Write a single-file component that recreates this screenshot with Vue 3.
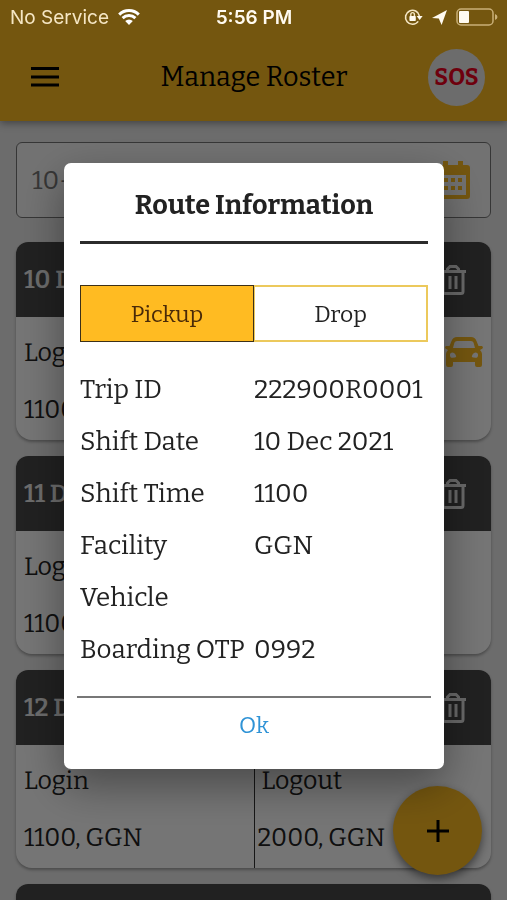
<script setup>
import { ref } from 'vue'

const date = ref('10-12-2021')
const direction = ref('Pickup')

const rosters = [
  { day: '10 Dec 2021', login: '1100, GGN', logout: '2000, GGN', cab: true },
  { day: '11 Dec 2021', login: '1100, GGN', logout: '2000, GGN', cab: false },
  { day: '12 Dec 2021', login: '1100, GGN', logout: '2000, GGN', cab: false },
  { day: '13 Dec 2021', login: '1100, GGN', logout: '2000, GGN', cab: false },
]

const details = [
  ['Trip ID', '222900R0001'],
  ['Shift Date', '10 Dec 2021'],
  ['Shift Time', '1100'],
  ['Facility', 'GGN'],
  ['Vehicle', ''],
  ['Boarding OTP', '0992'],
]
</script>

<template>
  <div class="screen">
    <header class="app-bar">
      <div class="status">
        <div class="status-left">
          <span>No Service</span>
          <svg class="wifi" viewBox="0 0 22 16" aria-hidden="true">
            <path d="M1.2 5.6a14 14 0 0 1 19.6 0" />
            <path d="M4.6 9.2a9.2 9.2 0 0 1 12.8 0" />
            <path class="solid" d="M7.2 12a5.5 5.5 0 0 1 7.6 0L11 16z" />
          </svg>
        </div>
        <strong class="time">5:56 PM</strong>
        <div class="status-right">
          <svg class="lock" viewBox="0 0 19 18" aria-hidden="true">
            <path class="line" d="M14.2 13.4A7 7 0 1 1 15.4 8" />
            <path d="M12.6 8h6l-3 4z" />
            <rect x="5.4" y="8" width="6.4" height="5" rx="0.8" />
            <path class="thin" d="M6.8 8V6.4a1.8 1.8 0 0 1 3.6 0V8" />
          </svg>
          <svg class="arrow" viewBox="0 0 15 15" aria-hidden="true">
            <path d="M15 0 9.600 15 6.800 8.600 0 8z" />
          </svg>
          <svg class="battery" viewBox="0 0 42 18" aria-hidden="true">
            <rect class="case" x="1" y="1" width="36" height="16" rx="4" />
            <rect x="3" y="3" width="10" height="12" rx="1" />
            <path class="tip" d="M39 6q2.500 1 2.500 3t-2.500 3z" />
          </svg>
        </div>
      </div>
      <div class="toolbar">
        <button class="menu" type="button" aria-label="Menu">
          <svg viewBox="0 0 30 20"><path d="M1 1.500h28M1 10h28M1 18h28" /></svg>
        </button>
        <h1>Manage Roster</h1>
        <button class="sos" type="button">SOS</button>
      </div>
    </header>

    <main class="content">
      <div class="date-field">
        <input v-model="date" type="text" aria-label="Date" />
        <svg class="calendar" viewBox="0 0 34 38" aria-hidden="true">
          <path
            fill-rule="evenodd"
            d="M7 0h5v4h10V0h5v4h4q3 0 3 3v28q0 3-3 3H3q-3 0-3-3V7q0-3 3-3h4zM4 14v20h26V14z"
          />
          <path
            d="M8 17h4v4H8zM15 17h4v4h-4zM22 17h4v4h-4zM8 25h4v4H8zM15 25h4v4h-4zM22 25h4v4h-4z"
          />
        </svg>
      </div>

      <article v-for="r in rosters" :key="r.day" class="card">
        <div class="card-head">
          <h2>{{ r.day }}</h2>
          <button class="trash" type="button" aria-label="Delete">
            <svg viewBox="0 0 26 30">
              <path d="M0 6.500h26M3 7v19.500q0 2 2 2h16q2 0 2-2V7M7.500 6V4l2.500-2.500h6L18.500 4v2M10 11v13M16 11v13" />
            </svg>
          </button>
        </div>
        <div class="card-body">
          <div class="half">
            <p>Login</p>
            <p>{{ r.login }}</p>
          </div>
          <div class="half logout">
            <p>Logout</p>
            <p>{{ r.logout }}</p>
            <svg v-if="r.cab" class="car" viewBox="0 0 38 30" aria-hidden="true">
              <path
                fill-rule="evenodd"
                d="M12 0h14q4 0 5.500 4l2 5H37q1.500 1 .5 2.500L35 13q2 2 2 4v11q0 2-2 2h-3q-2 0-2-2v-3H8v3q0 2-2 2H3q-2 0-2-2V17q0-2 2-4L.5 11.500Q-.5 10 1 9h3.500l2-5Q8 0 12 0zM12 4q-2 0-2.600 1.800L8 11h22l-1.400-5.200Q28 4 26 4zM7.500 15.500a2.600 2.600 0 1 0 .1 5.200q2.400 0 3.600-.7-.4-4-3.700-4.500zM30.500 15.500q-3.300.5-3.700 4.500 1.200.7 3.600.7a2.600 2.600 0 1 0 .1-5.200z"
              />
            </svg>
          </div>
        </div>
      </article>
    </main>

    <button class="fab" type="button" aria-label="Add roster">
      <svg viewBox="0 0 22 22"><path d="M11 0v22M0 11h22" /></svg>
    </button>

    <div class="backdrop">
      <section class="dialog" role="dialog" aria-modal="true" aria-labelledby="dialog-title">
        <h2 id="dialog-title">Route Information</h2>
        <div class="tabs">
          <button
            v-for="d in ['Pickup', 'Drop']"
            :key="d"
            type="button"
            :class="{ active: direction === d }"
            @click="direction = d"
          >
            {{ d }}
          </button>
        </div>
        <dl>
          <div v-for="[label, value] in details" :key="label" class="row">
            <dt>{{ label }}</dt>
            <dd>{{ value }}</dd>
          </div>
        </dl>
        <div class="actions">
          <button type="button">Ok</button>
        </div>
      </section>
    </div>
  </div>
</template>

<style>
body {
  margin: 0;
}
</style>

<style scoped>
.screen {
  height: 100vh;
  overflow: hidden;
  background: #ebebeb;
  color: #222;
  font-family: Bitter, 'DejaVu Serif', serif;
}
h1,
h2,
p,
dl,
dd {
  margin: 0;
}
button {
  padding: 0;
  border: 0;
  background: none;
  color: inherit;
  font: inherit;
}
svg {
  display: block;
}

.app-bar {
  height: 121px;
  background: #fdbc22;
  box-shadow: 0 2px 8px rgba(0, 0, 0, 0.4);
}
.status {
  position: relative;
  z-index: 3;
  display: grid;
  grid-template-columns: 1fr auto 1fr;
  align-items: center;
  height: 34px;
  padding: 0 9px 0 10px;
  color: #fffaf0;
  fill: #fffaf0;
  font-family: Inter, sans-serif;
  font-size: 19px;
}
.status-left,
.status-right {
  display: flex;
  align-items: center;
  gap: 9px;
}
.status-left {
  color: #f5e6c4;
}
.status-right {
  justify-content: flex-end;
}
.time {
  font-weight: 600;
}
.wifi {
  width: 22px;
  height: 16px;
  fill: none;
  stroke: #fff;
  stroke-width: 3;
}
.wifi .solid {
  fill: #fff;
  stroke: none;
}
.lock {
  width: 19px;
  height: 18px;
}
.lock .line,
.lock .thin {
  fill: none;
  stroke: #f5e6c4;
  stroke-width: 1.6;
}
.lock .thin {
  stroke-width: 1.4;
}
.arrow {
  width: 15px;
  height: 15px;
}
.battery {
  width: 42px;
  height: 18px;
}
.battery .case {
  fill: none;
  stroke: #c9b078;
  stroke-width: 1.5;
}
.battery .tip {
  fill: #c9b078;
}
.toolbar {
  display: flex;
  align-items: center;
  justify-content: space-between;
  height: 86px;
  padding: 0 22px 0 30px;
  color: #000;
}
.menu,
.sos {
  display: flex;
  align-items: center;
  height: 57px;
}
.menu {
  width: 50px;
}
.menu svg {
  width: 30px;
  height: 20px;
  stroke: #000;
  stroke-width: 3;
}
.toolbar h1 {
  font-size: 27px;
  font-weight: 400;
}
.sos {
  justify-content: center;
  width: 57px;
  border-radius: 50%;
  background: #ebebeb;
  color: #f00020;
  font-size: 23px;
  font-weight: 700;
}

.content {
  display: flex;
  flex-direction: column;
  gap: 16px;
  padding: 21px 16px 0;
}
.date-field {
  display: flex;
  align-items: center;
  height: 74px;
  margin-bottom: 8px;
  padding: 0 20px 0 15px;
  border: 1px solid #777;
  border-radius: 6px;
  background: #f8f8f8;
}
.date-field input {
  flex: 1;
  min-width: 0;
  padding: 0;
  border: 0;
  outline: 0;
  background: none;
  color: #777;
  font: inherit;
  font-size: 26px;
}
.calendar {
  width: 34px;
  height: 38px;
  fill: #fdbc22;
}
.card {
  flex: none;
  overflow: hidden;
  border-radius: 12px 12px 16px 16px;
  background: #fff;
  box-shadow: 0 2px 3px rgba(0, 0, 0, 0.3);
}
.card-head {
  display: flex;
  align-items: center;
  justify-content: space-between;
  height: 75px;
  padding: 0 25px 0 8px;
  background: #484848;
  color: #ebebeb;
}
.card-head h2 {
  font-size: 25px;
  font-weight: 600;
}
.trash svg {
  width: 26px;
  height: 30px;
  fill: none;
  stroke: #e4e4e4;
  stroke-width: 3;
}
.card-body {
  display: grid;
  grid-template-columns: 1fr 1fr;
}
.half {
  position: relative;
  padding: 8px 0 1px 8px;
  font-size: 25px;
  line-height: 57px;
}
.logout {
  padding-left: 3px;
  border-left: 1px solid #333;
}
.logout p:first-child {
  padding-left: 4px;
}
.car {
  position: absolute;
  top: 20px;
  right: 8px;
  width: 38px;
  height: 30px;
  fill: #fdbc22;
}
.fab {
  position: fixed;
  right: 25px;
  bottom: 25px;
  z-index: 1;
  display: flex;
  align-items: center;
  justify-content: center;
  width: 89px;
  height: 89px;
  border-radius: 50%;
  background: #fdbc22;
  box-shadow: 0 4px 10px rgba(0, 0, 0, 0.5);
}
.fab svg {
  width: 22px;
  height: 22px;
  stroke: #000;
  stroke-width: 3;
}

.backdrop {
  position: fixed;
  inset: 0;
  z-index: 2;
  display: flex;
  align-items: center;
  padding: 32px 63px 0 64px;
  background: rgba(0, 0, 0, 0.54);
}
.dialog {
  flex: 1;
  padding: 0 16px 17px;
  border-radius: 7px;
  background: #fff;
  box-shadow: 0 16px 44px rgba(0, 0, 0, 0.38);
}
.dialog h2 {
  padding-top: 6px;
  border-bottom: 3px solid #2b2b2b;
  font-size: 27px;
  line-height: 72px;
  text-align: center;
}
.tabs {
  display: grid;
  grid-template-columns: 1fr 1fr;
  margin: 41px 0 22px;
}
.tabs button {
  height: 57px;
  border: 2px solid #ecc95c;
  border-left-width: 1px;
  font-size: 23px;
}
.tabs .active {
  border: 1px solid #3c3018;
  background: #ffbb22;
  color: #4a2a08;
}
.row {
  display: grid;
  grid-template-columns: 1fr 1fr;
  font-size: 26px;
  line-height: 52px;
  white-space: nowrap;
}
.actions {
  margin: 20px -3px 0;
  border-top: 2px solid #777;
}
.actions button {
  display: block;
  width: 100%;
  height: 54px;
  color: #2f93d6;
  font-size: 23px;
}
</style>
